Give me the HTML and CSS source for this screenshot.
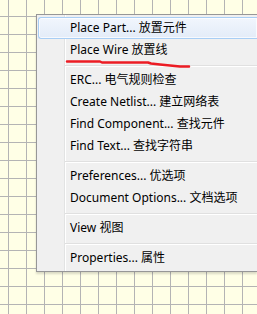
FILE: index.html
```html
<!DOCTYPE html>
<html lang="en">

<head>
  <meta charset="UTF-8">
  <title>Context Menu</title>
  <link rel="stylesheet" href="styles.css">
</head>

<body>
  <div class="canvas">
    <div class="menu">
      <div class="item active">Place Part... 放置元件</div>
      <div class="item">Place Wire 放置线</div>
      <div class="sep"></div>
      <div class="item">ERC... 电气规则检查</div>
      <div class="item">Create Netlist... 建立网络表</div>
      <div class="item">Find Component... 查找元件</div>
      <div class="item">Find Text... 查找字符串</div>
      <div class="sep"></div>
      <div class="item">Preferences... 优选项</div>
      <div class="item">Document Options... 文档选项</div>
      <div class="sep"></div>
      <div class="item">View 视图</div>
      <div class="sep"></div>
      <div class="item">Properties... 属性</div>
    </div>

    <svg class="mark" width="257" height="314" viewBox="0 0 257 314">
      <polyline points="67,61.5 100,61.5 102,62.5 148,62.5 151,63.5 160,64.5 170,65.5 180,66.5 189,66.5"
        fill="none" stroke="#ec1c24" stroke-width="2.5" stroke-linecap="round" stroke-linejoin="round" />
    </svg>
  </div>
</body>

</html>
```

FILE: styles.css
```css
* {
  margin: 0;
  padding: 0;
  box-sizing: border-box;
}

body {
  width: 257px;
  height: 314px;
  overflow: hidden;
  font-family: 'Noto Sans', 'Noto Sans CJK SC', sans-serif;
}

.canvas {
  position: relative;
  width: 257px;
  height: 314px;
  overflow: hidden;
  background-color: #ffffe6;
  background-image:
    linear-gradient(to right, #b4b4b4 1px, transparent 1px),
    linear-gradient(to bottom, #b4b4b4 1px, transparent 1px);
  background-size: 18px 18px;
  background-position: 8px 16px;
}

.menu {
  position: absolute;
  left: 36px;
  top: 14px;
  width: 221px;
  padding: 2px 0 2px 1px;
  background-color: #f0f0f0;
  background-image: linear-gradient(to right,
      transparent 27px, #e2e3e3 27px, #e2e3e3 28px,
      #fff 28px, #fff 29px, transparent 29px);
  border: 1px solid #979797;
  border-right: none;
  box-shadow: 0 2px 2px rgba(0, 0, 0, 0.15);
}

.item {
  height: 22px;
  line-height: 20px;
  padding-left: 31px;
  font-size: 12px;
  color: #000;
  white-space: nowrap;
  border: 1px solid transparent;
  border-radius: 3px;
}

.item.active {
  border-color: #a8cef5;
  border-right: none;
  border-top-right-radius: 0;
  border-bottom-right-radius: 0;
  background: linear-gradient(to bottom, #f1f6fd, #e3ecf8);
  box-shadow: inset 0 0 0 1px rgba(255, 255, 255, 0.7);
}

.sep {
  height: 2px;
  margin: 4px 0 2px 27px;
  border-top: 1px solid #e0e0e0;
  border-bottom: 1px solid #fff;
}

.mark {
  position: absolute;
  left: 0;
  top: 0;
}
```
